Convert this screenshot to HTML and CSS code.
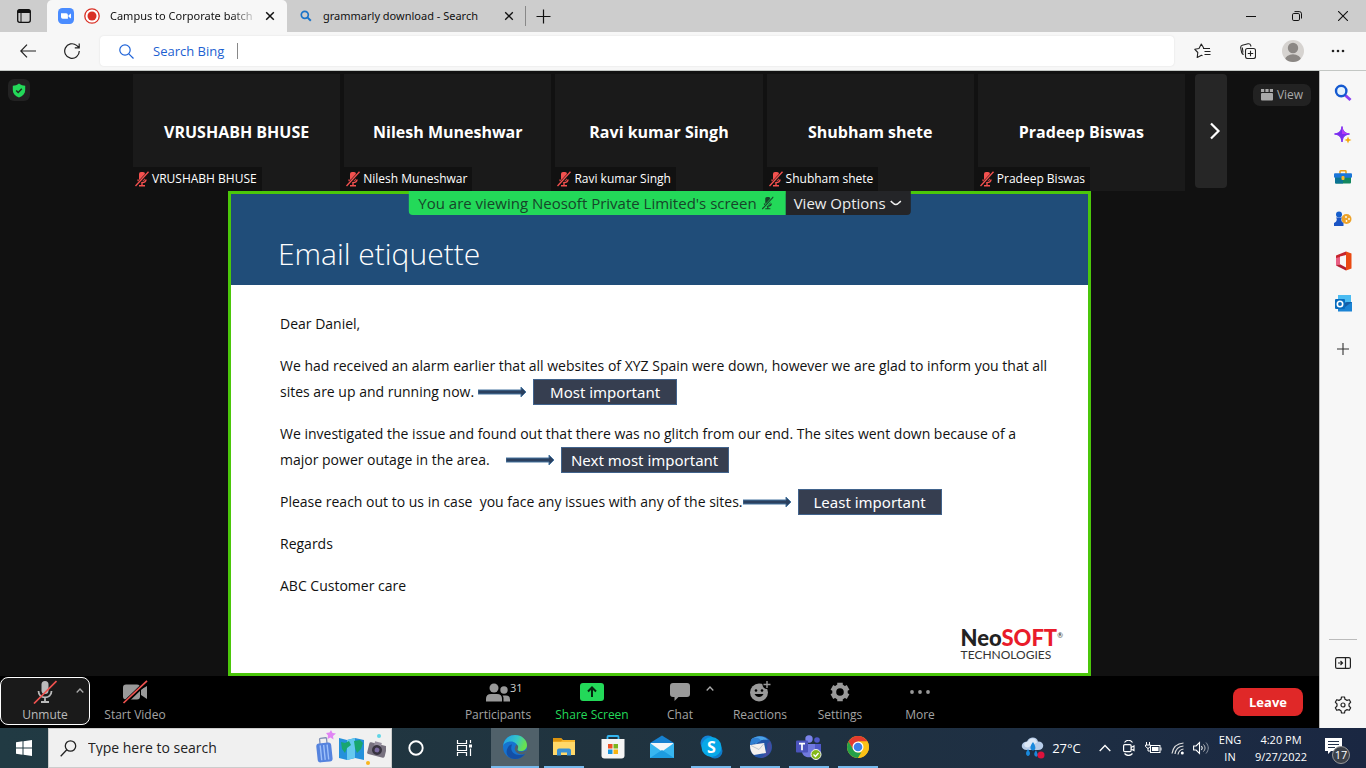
FILE: index.html
```html
<!DOCTYPE html>
<html lang="en">
<head>
<meta charset="utf-8">
<title>Campus to Corporate batch</title>
<link rel="stylesheet" href="styles.css">
</head>
<body>
<header class="browser">
  <div class="tabstrip">
    <button class="tab-menu" aria-label="Tab actions"><svg width="16" height="16" viewBox="0 0 16 16"><rect x="1.7" y="1.7" width="12.6" height="12.6" rx="2" fill="none" stroke="#111" stroke-width="1.3"/><path d="M1.5 3.5a2 2 0 0 1 2-2h9a2 2 0 0 1 2 2V5h-13z" fill="#111"/><path d="M5 5v9" stroke="#111"/></svg></button>
    <div class="tab tab-active">
      <svg width="16" height="16" viewBox="0 0 16 16"><rect width="16" height="16" rx="4.5" fill="#4a8cff"/><path d="M3 5.3h5.2A1.7 1.7 0 0 1 9.900 7v3.700H4.700A1.700 1.700 0 0 1 3 9zM10.500 7.300 13 5.500v5L10.500 8.800z" fill="#fff"/></svg>
      <svg class="rec" width="16" height="16" viewBox="0 0 16 16"><circle cx="8" cy="8" r="7.200" fill="#fff" stroke="#d93025" stroke-width="1.300"/><circle cx="8" cy="8" r="4.500" fill="#d93025"/></svg>
      <span class="tab-title fade">Campus to Corporate batch</span>
      <button class="tab-close" aria-label="Close tab"><svg width="10" height="10" viewBox="0 0 10 10"><path d="M1.200 1.200l7.600 7.600M8.800 1.200L1.200 8.800" stroke="#111" stroke-width="1.500"/></svg></button>
    </div>
    <div class="tab tab-second">
      <svg width="12" height="12" viewBox="0 0 12 12"><circle cx="4.800" cy="4.800" r="3.500" fill="none" stroke="#1a73c8" stroke-width="1.700"/><path d="M7.400 7.400l3.400 3.400" stroke="#1a73c8" stroke-width="2"/></svg>
      <span class="tab-title">grammarly download - Search</span>
      <button class="tab-close" aria-label="Close tab"><svg width="10" height="10" viewBox="0 0 10 10"><path d="M1.200 1.200l7.600 7.600M8.800 1.200L1.200 8.800" stroke="#111" stroke-width="1.300"/></svg></button>
    </div>
    <button class="new-tab" aria-label="New tab"><svg width="15" height="15" viewBox="0 0 15 15"><path d="M7.500 0.500v14M0.500 7.500h14" stroke="#111" stroke-width="1.200"/></svg></button>
    <div class="window-buttons">
      <button aria-label="Minimize"><svg width="10" height="10" viewBox="0 0 10 10"><path d="M0 5.500h10" stroke="#111"/></svg></button>
      <button aria-label="Restore"><svg width="10" height="10" viewBox="0 0 10 10"><rect x=".5" y="2.500" width="7" height="7" rx="1.300" fill="none" stroke="#111"/><path d="M2.500 .6H7.300A2.200 2.200 0 0 1 9.500 2.800V7.500" fill="none" stroke="#111"/></svg></button>
      <button aria-label="Close"><svg width="10" height="10" viewBox="0 0 10 10"><path d="M0 0l10 10M10 0L0 10" stroke="#111" stroke-width="1.100"/></svg></button>
    </div>
  </div>
  <div class="toolbar">
    <button class="nav" aria-label="Back"><svg width="16" height="14" viewBox="0 0 16 14"><path d="M7 .7L.8 7 7 13.300M.8 7H16" fill="none" stroke="#222" stroke-width="1.200"/></svg></button>
    <button class="nav" aria-label="Reload"><svg width="16" height="16" viewBox="0 0 16 16"><path d="M15.300 8A7.300 7.300 0 1 1 12.600 2.400L15 4.500M15.200 0.500V4.800H10.800" fill="none" stroke="#222" stroke-width="1.200"/></svg></button>
    <label class="address">
      <svg width="15" height="15" viewBox="0 0 15 15"><circle cx="6" cy="6" r="5.200" fill="none" stroke="#1d62d8" stroke-width="1.200"/><path d="M9.800 9.800l4.700 4.700" stroke="#1d62d8" stroke-width="1.200"/></svg>
      <input type="text" aria-label="Address and search" value="Search Bing">
      <span class="caret"></span>
    </label>
    <div class="tools">
      <button aria-label="Favorites"><svg width="17" height="16" viewBox="0 0 17 16"><path d="M9.700 5L7.300 1 5 5.500.8 6.300l3 3.200-.6 5 4.300-2.300 1 .5" fill="none" stroke="#222" stroke-width="1.100" stroke-linejoin="round"/><path d="M9 5.500h7M10.500 8.500H16.500M10.500 11.500H16.500" stroke="#222" stroke-width="1.200"/></svg></button>
      <button aria-label="Collections"><svg width="16" height="16" viewBox="0 0 16 16"><rect x="5.500" y="5.500" width="10" height="10" rx="2" fill="none" stroke="#222" stroke-width="1.100"/><path d="M10.500 7.800v5.400M7.800 10.500h5.400M3.700 11.500C2.500 11.300 2 10.500 1.700 9.500L.7 5C.5 3.500 1 2.700 2.300 2.300L8 .8C9.500.5 10.300 1 10.700 2.300L11 3.500M3 9.500L2.300 4.500" fill="none" stroke="#222" stroke-width="1.100"/></svg></button>
      <button aria-label="Profile"><svg width="22" height="22" viewBox="0 0 22 22"><clipPath id="av"><circle cx="11" cy="11" r="11"/></clipPath><g clip-path="url(#av)"><rect width="22" height="22" fill="#d6d3d0"/><circle cx="11" cy="8" r="5.200" fill="#8b8784"/><ellipse cx="11" cy="20" rx="8" ry="5.800" fill="#8b8784"/></g></svg></button>
      <button aria-label="Settings and more"><svg width="14" height="4" viewBox="0 0 14 4"><g fill="#222"><circle cx="2" cy="2" r="1.300"/><circle cx="7" cy="2" r="1.300"/><circle cx="12" cy="2" r="1.300"/></g></svg></button>
    </div>
  </div>
</header>

<svg class="defs" width="0" height="0" aria-hidden="true">
  <symbol id="mic" viewBox="0 0 14 16"><rect x="4" y="1" width="6" height="9" rx="2" fill="currentColor"/><path d="M3 8.500c0 4 8 4 8 0M7 11.500V14.500M4 14.700h6" fill="none" stroke="currentColor" stroke-width="1.400"/><path d="M.5 15.500L14 .8" stroke="var(--cut)" stroke-width="3"/><path d="M.5 15L13.500 .8" stroke="currentColor" stroke-width="1.300"/></symbol>
</svg>

<div class="workspace">
  <main class="meeting">
    <section class="gallery">
      <div class="gallery-left"><button class="shield" aria-label="Encryption"><svg width="14" height="15" viewBox="0 0 14 15"><path d="M7 .5C9 2 11 2.700 13.200 2.700V7C13.200 10.500 11 13 7 14.500 3 13 .8 10.500 .8 7V2.700C3 2.700 5 2 7 .5z" fill="#23d959"/><path d="M4.200 7.500l2 2 3.600-3.800" fill="none" stroke="#1c2b20" stroke-width="1.500"/></svg></button></div>
      <ul class="tiles">
        <li><strong>VRUSHABH BHUSE</strong><span class="name"><svg width="14" height="16"><use href="#mic"/></svg>VRUSHABH BHUSE</span></li>
        <li><strong>Nilesh Muneshwar</strong><span class="name"><svg width="14" height="16"><use href="#mic"/></svg>Nilesh Muneshwar</span></li>
        <li><strong>Ravi kumar Singh</strong><span class="name"><svg width="14" height="16"><use href="#mic"/></svg>Ravi kumar Singh</span></li>
        <li><strong>Shubham shete</strong><span class="name"><svg width="14" height="16"><use href="#mic"/></svg>Shubham shete</span></li>
        <li><strong>Pradeep Biswas</strong><span class="name"><svg width="14" height="16"><use href="#mic"/></svg>Pradeep Biswas</span></li>
      </ul>
      <button class="next" aria-label="Next"><svg width="12" height="18" viewBox="0 0 12 18"><path d="M2 1.500L9.500 9 2 16.500" fill="none" stroke="#fff" stroke-width="2.200"/></svg></button>
      <div class="gallery-right"><button class="view"><svg width="12" height="12" viewBox="0 0 12 12"><g fill="#a9a9a9"><rect width="3.200" height="3"/><rect x="4.400" width="3.200" height="3"/><rect x="8.800" width="3.200" height="3"/><rect y="4" width="12" height="7.500" rx="1"/></g></svg>View</button></div>
    </section>

    <section class="stage">
      <article class="slide">
        <div class="banner">
          <span class="viewing">You are viewing Neosoft Private Limited's screen <svg width="12" height="14"><use href="#mic"/></svg></span>
          <button class="options">View Options <svg width="12" height="7" viewBox="0 0 12 7"><path d="M1 1c2 2 3 3.500 5 3.500S9 3 11 1" fill="none" stroke="#eee" stroke-width="1.700"/></svg></button>
        </div>
        <h1>Email etiquette</h1>
        <div class="letter">
          <p>Dear Daniel,</p>
          <div class="para">We had received an alarm earlier that all websites of XYZ Spain were down, however we are glad to inform you that all
            <div class="line">sites are up and running now.<svg class="arrow first" viewBox="0 0 48 10"><path d="M0 3h43V0l5 5-5 5V7H0z"/></svg><span class="tag">Most important</span></div>
          </div>
          <div class="para">We investigated the issue and found out that there was no glitch from our end. The sites went down because of a
            <div class="line">major power outage in the area.<svg class="arrow second" viewBox="0 0 48 10"><path d="M0 3h43V0l5 5-5 5V7H0z"/></svg><span class="tag tag-wide">Next most important</span></div>
          </div>
          <div class="para line">Please reach out to us in case&nbsp; you face any issues with any of the sites.<svg class="arrow" viewBox="0 0 48 10"><path d="M0 3h43V0l5 5-5 5V7H0z"/></svg><span class="tag">Least important</span></div>
          <p>Regards</p>
          <p>ABC Customer care</p>
        </div>
        <footer class="brand"><div class="brand-name">Neo<span>SOFT</span><sup>®</sup></div><div class="brand-sub">TECHNOLOGIES</div></footer>
      </article>
    </section>

    <nav class="controls">
      <div class="group">
        <button class="ctl unmute"><svg width="24" height="24" viewBox="0 0 24 24"><rect x="8.500" y="1" width="7" height="13" rx="3.500" fill="#bbb"/><path d="M5.500 11c0 8.500 13 8.500 13 0M12 17.500V21.500M8 22h8" fill="none" stroke="#bbb" stroke-width="1.800"/><path d="M1 23.500L23.500 1" stroke="#f0524f" stroke-width="1.700"/></svg>Unmute<svg class="caret-up" width="8" height="5" viewBox="0 0 8 5"><path d="M.7 4.500L4 1l3.300 3.500" fill="none" stroke="#aaa" stroke-width="1.300"/></svg></button>
        <button class="ctl video"><svg width="26" height="24" viewBox="0 0 26 24"><rect x="1" y="4.500" width="17" height="15" rx="3" fill="#999"/><path d="M19 9.500L25 6v13l-6-4z" fill="#999"/><path d="M2.500 23L25.500 1" stroke="#000" stroke-width="4"/><path d="M1.500 23L25 .8" stroke="#f0524f" stroke-width="1.700"/></svg>Start Video</button>
      </div>
      <div class="group">
        <button class="ctl participants"><svg width="24" height="24" viewBox="0 0 24 24"><g fill="#999"><circle cx="8" cy="8" r="4.500"/><path d="M0 21.500v-2.500q0-5 5-5h6q5 0 5 5v2.500z"/><circle cx="18" cy="10" r="3.700"/><path d="M17.500 21.500v-3.500q0-1.500-1-2.500h3.500q4 0 4 4v2z"/></g></svg>Participants<span class="count">31</span></button>
        <button class="ctl share"><svg width="24" height="24" viewBox="0 0 24 24"><rect y="3" width="24" height="18" rx="3" fill="#23d959"/><path d="M12 17V7.500M8 11.500l4-4 4 4" fill="none" stroke="#05250f" stroke-width="2"/></svg>Share Screen</button>
        <button class="ctl chat"><svg width="20" height="24" viewBox="0 0 20 24"><path d="M3 3h14q3 0 3 3v8q0 3-3 3H8.500L4.500 21V17H3q-3 0-3-3V6q0-3 3-3z" fill="#999"/></svg>Chat<svg class="caret-up" width="8" height="5" viewBox="0 0 8 5"><path d="M.7 4.500L4 1l3.300 3.500" fill="none" stroke="#aaa" stroke-width="1.300"/></svg></button>
        <button class="ctl reactions"><svg width="22" height="24" viewBox="0 0 22 24"><circle cx="10" cy="12.500" r="9" fill="#999"/><circle cx="18" cy="4.500" r="4.500" fill="#000"/><path d="M18 1v7M14.500 4.500h7" stroke="#999" stroke-width="1.400"/><circle cx="7" cy="10.500" r="1.300"/><circle cx="13" cy="10.500" r="1.300"/><path d="M5.500 14c2 4 7 4 9 0z"/></svg>Reactions</button>
        <button class="ctl settings"><svg width="20" height="24" viewBox="0 0 20 24"><circle cx="10" cy="12" r="5.800" fill="none" stroke="#999" stroke-width="4"/><g stroke="#999" stroke-width="5.500"><path d="M10 2.700v2.500M10 18.800v2.500M1.900 7.400l2.200 1.200M15.900 15.400l2.200 1.200M1.900 16.600l2.200-1.200M15.900 8.600l2.200-1.200"/></g></svg>Settings</button>
        <button class="ctl more"><svg width="20" height="24" viewBox="0 0 20 24"><g fill="#999"><circle cx="2" cy="12" r="1.900"/><circle cx="10" cy="12" r="1.900"/><circle cx="18" cy="12" r="1.900"/></g></svg>More</button>
      </div>
      <button class="leave">Leave</button>
    </nav>
  </main>

  <aside class="sidebar">
    <button aria-label="Search"><svg width="18" height="18" viewBox="0 0 18 18"><path d="M11 11l5.500 5" stroke="#8a3ff0" stroke-width="3"/><circle cx="7.200" cy="7" r="5.200" fill="#e4f3fd" stroke="#1459d0" stroke-width="2.400"/></svg></button>
    <button aria-label="Discover"><svg width="18" height="18" viewBox="0 0 18 18"><path d="M8 .5C9 5.500 10.500 7 15.500 8 10.500 9 9 10.500 8 16 7 10.500 5.500 9 .5 8 5.500 7 7 5.500 8 .5z" fill="#7a2cf0" stroke="#7a2cf0"/><path d="M8 .5C9 5.500 10.500 7 15.500 8L8 8z" fill="#b43cf5"/><path d="M14 10.500l1 2.500 2.500 1-2.500 1-1 2.500-1-2.500-2.500-1 2.500-1z" fill="#f6a90c"/></svg></button>
    <button aria-label="Tools"><svg width="18" height="14" viewBox="0 0 18 14"><path d="M6 4V1.500q0-.7.800-.7h4.400q.8 0 .8.700V4" fill="none" stroke="#e8a018" stroke-width="1.500"/><rect x="1" y="4" width="16" height="9.500" rx="1" fill="#12875f"/><path d="M1 8h8v5.500H2q-1 0-1-1z" fill="#0b7394"/><rect x="0" y="3.200" width="18" height="4.500" rx="1" fill="#1b76d8"/><rect x="7.500" y="6" width="3" height="4" rx="1" fill="#f9bb28"/></svg></button>
    <button aria-label="Games"><svg width="18" height="16" viewBox="0 0 18 16"><circle cx="12.500" cy="8" r="5" fill="#eda32a"/><g fill="#fff"><circle cx="12" cy="6" r=".9"/><circle cx="15" cy="8" r=".9"/><circle cx="12.500" cy="10" r=".9"/></g><circle cx="5" cy="3.500" r="3" fill="#165ecc"/><path d="M2 6.500h6l-.8 1.500c0 2 .8 3 2.300 4v3H0v-3C2 11 2.800 10 2.800 8z" fill="#1b54c4"/></svg></button>
    <button aria-label="Office"><svg width="17" height="20" viewBox="0 0 17 20"><path d="M11 .5L1 4.500v10l4-1.500V5.500L11 4z" fill="#c6252c"/><path d="M11 .5l5.500 2v15L11 19.500z" fill="#ea4a12"/><path d="M1 14.500l4-1.200 6 3.200v3z" fill="#b41d2f"/><path d="M1 7v7.500L5 13V6z" fill="#e95e83"/></svg></button>
    <button aria-label="Outlook"><svg width="17" height="17" viewBox="0 0 17 17"><rect x="3" width="13" height="10" fill="#4bbcf2"/><path d="M3 7h14v9.500H3z" fill="#1a83d4"/><path d="M17 7l-7 5-3-2 5-3z" fill="#155ea6"/><rect y="4" width="10" height="10" rx="1" fill="#086cbe"/><circle cx="5" cy="9" r="2.700" fill="none" stroke="#fff" stroke-width="1.600"/></svg></button>
    <button aria-label="Add" class="add"><svg width="12" height="12" viewBox="0 0 12 12"><path d="M6 0v12M0 6h12" stroke="#333" stroke-width="1.100"/></svg></button>
    <hr>
    <button aria-label="Hide sidebar"><svg width="16" height="12" viewBox="0 0 16 12"><rect x=".6" y=".6" width="14.800" height="10.800" rx="1.500" fill="none" stroke="#222" stroke-width="1.200"/><path d="M10.500 .5v11" stroke="#222" stroke-width="1.200"/><path d="M3 6h4M5.500 4l2 2-2 2" fill="none" stroke="#222" stroke-width="1.200"/></svg></button>
    <button aria-label="Sidebar settings"><svg width="18" height="18" viewBox="0 0 18 18"><path d="M7.500 1h3l.5 2.300 2 1.100 2.300-.7 1.400 2.500L15 8v2l1.700 1.800-1.400 2.500-2.300-.7-2 1.100-.5 2.300h-3L7 14.700l-2-1.100-2.300.7-1.400-2.500L3 10V8L1.300 6.200l1.400-2.500 2.300.7 2-1.100z" fill="none" stroke="#222" stroke-width="1.200" stroke-linejoin="round"/><circle cx="9" cy="9" r="2" fill="none" stroke="#222" stroke-width="1.200"/></svg></button>
  </aside>
</div>

<footer class="taskbar">
  <button class="start" aria-label="Start"><svg width="16" height="16" viewBox="0 0 16 16"><path d="M0 2.200L6.500 1.300V7.500H0zM7.500 1.200L16 0v7.500H7.500zM0 8.500h6.500v6.200L0 13.800zM7.500 8.500H16V16l-8.500-1.200z" fill="#fff"/></svg></button>
  <label class="search">
    <svg width="17" height="17" viewBox="0 0 17 17"><circle cx="10.500" cy="6" r="5.200" fill="none" stroke="#222" stroke-width="1.300"/><path d="M6.800 9.800L.7 16.200" stroke="#222" stroke-width="1.300"/></svg>
    <input type="text" aria-label="Search" placeholder="Type here to search">
    <svg width="70" height="38" viewBox="0 0 70 38"><path d="M15 1l1.500 3 3.500.5-3 2.500.5 3.500-3-2-3 1.500.5-3.500L10 4l3.500-.5z" fill="#e184f4"/><g transform="rotate(-6 8 24)"><path d="M5 15v-5q0-1 1-1h5q1 0 1 1v5" fill="none" stroke="#8391b5" stroke-width="1.300"/><rect x="1" y="14" width="15" height="19" rx="3" fill="#5583de"/><path d="M5 16v15M8.500 16v15M12 16v15" stroke="#9dc0fa" stroke-width="1.400"/></g><path d="M23 9l8 2 8-2 9 2v20l-9-2-8 2-8-2z" fill="#2491db"/><path d="M31 11l8-2v20l-8 2z" fill="#65c9ef"/><path d="M25 13l4 1 4-2 2 4-4 3-2 5-3-4zM38 12l6-1 3 3-2 6-4 4-2-5z" fill="#19a66f"/><g transform="rotate(14 61 21)"><rect x="52" y="15" width="18" height="12" rx="1.500" fill="#77717f"/><rect x="57" y="13" width="7" height="4" fill="#968f9e"/><circle cx="61" cy="21" r="5" fill="#37333f"/><circle cx="61" cy="21" r="2.400" fill="#796aa0"/></g><circle cx="63" cy="7" r="2" fill="#60d5e6"/><circle cx="52" cy="34" r="2" fill="#f9b61c"/></svg>
  </label>
  <button class="sys" aria-label="Cortana"><svg width="16" height="16" viewBox="0 0 16 16"><circle cx="8" cy="8" r="6.700" fill="none" stroke="#fff" stroke-width="1.900"/></svg></button>
  <button class="sys" aria-label="Task View"><svg width="17" height="16" viewBox="0 0 17 16"><path d="M1.500 0v3.500h9V0M1.500 16v-3.500h9V16M1.500 5.500h9v5h-9zM14.500 0v3M14.500 8.500V16" fill="none" stroke="#fff" stroke-width="1.200"/><rect x="13" y="4.500" width="3" height="3" fill="#fff"/></svg></button>
  <div class="apps">
    <button class="active" aria-label="Edge"><svg width="24" height="24" viewBox="0 0 24 24"><defs><linearGradient id="eg" x1="0" y1="0" x2="1" y2=".3"><stop offset="0" stop-color="#1f9bea"/><stop offset=".6" stop-color="#35c6c8"/><stop offset="1" stop-color="#68e250"/></linearGradient></defs><circle cx="12" cy="12" r="12" fill="#1673cf"/><path d="M0 11C1 4 6 0 12 0c7 0 12 5 12 10 0 4-3 6-6 6-3 0-4-1-3.500-2.500C16 10 12 6.500 8 6.500 4 6.500 1 8.500 0 11z" fill="url(#eg)"/><path d="M9 9.500c-3 7 3 13 13 9.500-2 3-6 5-10 5C5 24 1 18 5.500 11.500 6.500 10 8 9.500 9 9.500z" fill="#134fa5"/><path d="M13.500 9.500c2 1 2 3 1 4.500-.5 1.500 1 2.700 3.500 2.700 2 0 4-.7 5.500-2-.2 1.500-1 3.500-1.800 4.300-7 2-13-4-8.200-9.500z" fill="#50606b"/></svg></button>
    <button class="open" aria-label="File Explorer"><svg width="22" height="20" viewBox="0 0 22 20"><path d="M0 1h8l2 2h12v15H0z" fill="#f7b72e"/><path d="M0 1h8l1.500 2L8 4.500H0z" fill="#dc930f"/><path d="M0 5h22v13H0z" fill="#ffd869"/><path d="M4 18.500v-5q0-2 2-2h10q2 0 2 2v5h-4v-3H8v3z" fill="#388fd3"/></svg></button>
    <button aria-label="Microsoft Store"><svg width="24" height="24" viewBox="0 0 24 24"><path d="M6.500 5V2q0-1 1-1h9q1 0 1 1v3" fill="none" stroke="#33b6f1" stroke-width="1.800"/><path d="M.5 4h23v16.500q0 3-3 3h-17q-3 0-3-3z" fill="#f5f5f5"/><path d="M7 9h4.500v4.500H7z" fill="#ef5124"/><path d="M12.500 9H17v4.500h-4.500z" fill="#7ab51e"/><path d="M7 14.500h4.500V19H7z" fill="#1896df"/><path d="M12.500 14.500H17V19h-4.500z" fill="#f8b411"/></svg></button>
    <button aria-label="Mail"><svg width="24" height="24" viewBox="0 0 24 24"><path d="M0 8L12 .5 24 8v15H0z" fill="#1681d0"/><path d="M1 8h22v8H1z" fill="#f3f7f9"/><path d="M0 8l12 8.500L24 8v15H0z" fill="#38b6ef"/><path d="M0 23l12-8 12 8z" fill="#1d9ce0"/></svg></button>
    <button class="open" aria-label="Skype"><svg width="23" height="24" viewBox="0 0 23 24"><circle cx="8" cy="8" r="7.500" fill="#1483d5"/><circle cx="15" cy="16" r="7.500" fill="#0f7bc9"/><circle cx="11.500" cy="12" r="10" fill="#08a9e8"/><text x="11.500" y="18" text-anchor="middle" class="skype-s">S</text></svg></button>
    <button class="open" aria-label="Thunderbird"><svg width="24" height="24" viewBox="0 0 24 24"><circle cx="13" cy="12" r="11" fill="#2454a6"/><path d="M3 5C7 0 16 0 20 5c-5-1-9 0-12 4z" fill="#4aa3e8"/><path d="M22 6c4 8-1 17-10 17 5-2 8-7 7-14z" fill="#454d9f"/><path d="M2 10l14-2 2 10-12 2C3 18 2 14 2 10z" fill="#f5f1ee"/><path d="M3 10.500l8 4 5-6" fill="none" stroke="#bfc6cf"/><path d="M5 3c4-1 7 0 8 3l-5 2-6 2c0-3 1-6 3-7z" fill="#2f7fd2"/></svg></button>
    <button class="open" aria-label="Teams"><svg width="26" height="25" viewBox="0 0 26 25"><circle cx="13" cy="4" r="3.700" fill="#7b83eb"/><circle cx="21" cy="5" r="2.800" fill="#5059c9"/><path d="M15 9h10v7c0 4-3 5-5 4z" fill="#5059c9"/><path d="M6 9h13v8c0 7-12 7-13 0z" fill="#7179df"/><rect y="5.500" width="12" height="12" rx="1" fill="#4b53bc"/><path d="M3 8.700h6M6 8.700v6.500" stroke="#fff" stroke-width="1.700"/><circle cx="20" cy="19.500" r="5" fill="#85b91b" stroke="#f2f2f2"/><path d="M17.500 19.500l2 2 3-3.500" fill="none" stroke="#fff" stroke-width="1.300"/></svg></button>
    <button class="open" aria-label="Chrome"><svg width="22" height="22" viewBox="0 0 22 22"><circle cx="11" cy="11" r="11" fill="#fbc116"/><path d="M1.500 5.500A11 11 0 0 1 20.500 5.500H11L6.200 13.700z" fill="#e33b2e"/><path d="M1.500 5.500L6.300 13.700Q8 16 11 16.500h4L11 22A11 11 0 0 1 1.500 5.500z" fill="#24a148"/><path d="M15.800 13.700L11 22a11 11 0 0 0 9.500-16.500H11z" fill="#fbc116"/><circle cx="11" cy="11" r="5.500" fill="#fff"/><circle cx="11" cy="11" r="4.300" fill="#3d7fe8"/></svg></button>
  </div>
  <div class="tray">
    <button class="weather"><svg width="24" height="22" viewBox="0 0 24 22"><path d="M6 13c-7 0-7-8 0-8.500C8-1 16-1 17 4.500c7 0 7 8.500 0 8.500z" fill="#b6cce8"/><path d="M7 10.500c-5 0-5-5.500 0-6C9 .5 15 .5 16 5.500z" fill="#dce8f6"/><path d="M12 5q-4 5-2 7.500 2 2 4 0Q15.500 10 12 5zM7 12q-3 4-1.500 6t3 0Q10 16 7 12zM15 13q-3 4-1 6t3-1z" fill="#1989dc"/><circle cx="20" cy="18" r="3.500" fill="#dc123c"/></svg>27°C</button>
    <button aria-label="Show hidden icons"><svg width="12" height="8" viewBox="0 0 12 8"><path d="M.7 7L6 1.500 11.300 7" fill="none" stroke="#fff" stroke-width="1.300"/></svg></button>
    <button aria-label="Meet now"><svg width="12" height="16" viewBox="0 0 12 16"><rect x=".6" y="4.600" width="7.500" height="7" rx="1.200" fill="none" stroke="#fff" stroke-width="1.200"/><path d="M8 7.500l3-1.500v4.500L8 9M1.500 2.500C4-.5 7-.5 9.500 2.500M1.500 13.500c2.500 2.500 5.500 2.500 8 0" fill="none" stroke="#fff" stroke-width="1.100"/></svg></button>
    <button aria-label="Battery"><svg width="17" height="14" viewBox="0 0 17 14"><rect x="5.500" y="4.500" width="9.500" height="7" fill="none" stroke="#fff"/><rect x="7" y="6" width="6.500" height="4" fill="#fff"/><path d="M16 6.500v3M1.500 1v3M4.500 1v3M.5 4h5v1.500L3 7.500.5 5.500zM3 7v3h2.500" stroke="#fff" fill="none"/></svg></button>
    <button aria-label="Network"><svg width="13" height="14" viewBox="0 0 13 14"><path d="M1 12.500C2 6 6 2.500 12.500 2M4 13C4.500 8.500 7.500 5.500 12.500 5M7 13.500C7.500 10.500 9.500 8.500 12.500 8" fill="none" stroke="#ddd" stroke-width="1.200"/><circle cx="11.300" cy="12" r="1.500" fill="#fff"/></svg></button>
    <button aria-label="Volume"><svg width="17" height="14" viewBox="0 0 17 14"><path d="M.6 5h2.500L6.500 1.500v11L3.100 9H.6zM8.500 5c1 1.300 1 2.700 0 4" fill="none" stroke="#fff" stroke-width="1.100"/><path d="M10.500 3.500c2 2.300 2 4.700 0 7" fill="none" stroke="#ccc"/><path d="M13 1.500c3 3.500 3 7.500 0 11" fill="none" stroke="#8a94a2"/></svg></button>
    <button class="lang">ENG<br>IN</button>
    <button class="clock">4:20 PM<br>9/27/2022</button>
    <button class="notes" aria-label="17 notifications"><svg width="17" height="16" viewBox="0 0 17 16"><path d="M0 0h17v13H6l-3 3v-3H0z" fill="#fff"/><path d="M3 3.500h11M3 6.500h11M3 9.500h7" stroke="#24324a" stroke-width="1.200"/></svg><span>17</span></button>
  </div>
</footer>
</body>
</html>
```
FILE: styles.css
```css
* { box-sizing: border-box; }
body {
  margin: 0;
  min-height: 100vh;
  display: flex;
  flex-direction: column;
  font: 12px/16px "Open Sans", "Noto Sans", sans-serif;
  color: #111;
}
button {
  display: flex;
  align-items: center;
  justify-content: center;
  padding: 0;
  border: 0;
  background: none;
  font: inherit;
  color: inherit;
}
input { border: 0; padding: 0; background: none; font: inherit; color: inherit; outline: 0; min-width: 0; }
svg { display: block; flex: none; }
.defs { position: absolute; }

/* Browser chrome */
.tabstrip { display: flex; height: 32px; background: #cdcdcd; }
.tab-menu { width: 47px; }
.tab { display: flex; align-items: center; font-family: "Noto Sans", sans-serif; font-size: 11px; }
.tab-active { width: 240px; padding: 0 11px; background: #f7f7f7; border-radius: 5px 5px 0 0; }
.rec { margin-left: 10px; }
.tab-title { flex: 1; margin-left: 10px; white-space: nowrap; overflow: hidden; }
.tab-second .tab-title { margin-left: 11px; }
.fade { -webkit-mask-image: linear-gradient(to right, #000 82%, transparent); mask-image: linear-gradient(to right, #000 82%, transparent); }
.tab-close { width: 12px; height: 16px; margin-left: 6px; }
.tab-second { width: 239px; margin: 6px 0; padding: 0 10px 0 13px; border-right: 1px solid #888; }
.new-tab { width: 35px; }
.window-buttons { display: flex; margin-left: auto; }
.window-buttons button { width: 46px; }
.toolbar {
  display: flex;
  align-items: center;
  height: 39px;
  padding-left: 6px;
  background: #f7f7f7;
  border-bottom: 1px solid #c3c7c4;
}
.nav { width: 44px; height: 32px; }
.address {
  display: flex;
  align-items: center;
  flex: 1;
  height: 30px;
  margin-left: 6px;
  padding-left: 19px;
  border-radius: 4px;
  background: #fff;
  box-shadow: 0 0 2px #ddd;
  color: #1d5fd1;
  font-size: 13px;
}
.address input { width: 76px; margin-left: 19px; }
.caret { width: 1px; height: 16px; margin-left: 8px; background: #888; }
.tools { display: flex; padding: 0 6px; }
.tools button { width: 45px; height: 32px; }

/* Meeting */
.workspace { display: flex; flex: 1; }
.meeting { display: flex; flex-direction: column; flex: 1; min-width: 0; background: #111; color: #fff; }
.gallery { display: flex; padding-top: 3px; height: 120px; }
.gallery-left { width: 133px; padding: 5px 8px; }
.shield { width: 22px; height: 22px; border-radius: 6px; background: #222; }
.tiles {
  display: grid;
  grid-template-columns: repeat(5, 1fr);
  gap: 4px;
  flex: 1;
  margin: 0;
  padding: 0;
  list-style: none;
}
.tiles li { display: flex; flex-direction: column; align-items: flex-start; background: #1a1a1a; }
.tiles strong { flex: 1; align-self: stretch; padding-top: 46px; text-align: center; font-size: 16px; line-height: 24px; font-weight: 700; }
.name {
  --cut: #111;
  display: flex;
  align-items: center;
  gap: 3px;
  height: 24px;
  padding: 0 5px 0 2px;
  background: #111;
}
.name svg { color: #f4514f; }
.next { width: 32px; height: 114px; margin-left: 10px; padding-left: 7px; border-radius: 4px; background: #262626; }
.gallery-right { width: 92px; padding: 10px 8px 0 26px; }
.view { gap: 4px; width: 58px; height: 22px; border-radius: 7px; background: #222; color: #a9a9a9; }

.stage { display: flex; flex: 1; padding: 0 228px; }
.slide { position: relative; display: flex; flex-direction: column; flex: 1; min-width: 0; border: 3px solid #4bc70a; background: #fff; color: #111; }
.banner { position: absolute; top: -3px; left: 50%; display: flex; height: 24px; font-size: 15px; line-height: 24px; white-space: nowrap; transform: translateX(-50%); }
.viewing { --cut: #23d959; display: flex; gap: 5px; padding: 0 12px 0 10px; border-radius: 0 0 0 4px; background: #23d959; color: #17452a; }
.viewing svg { margin-top: 5px; }
.options { gap: 4px; padding: 0 9px 0 8px; border-radius: 0 0 4px 0; background: #242528; color: #eee; }
h1 { margin: 0; padding: 38px 47px 9px; background: #204d79; color: #fff; font-size: 30px; line-height: 44px; font-weight: 300; }
.letter { flex: 1; padding: 26px 20px 0 49px; font-size: 14px; line-height: 26px; white-space: nowrap; }
.letter p, .para { margin: 0 0 16px; }
.line { display: flex; align-items: center; height: 26px; }
.arrow { width: 48px; height: 10px; fill: #2b405f; stroke: #4775a0; stroke-width: 1px; }
.first { margin-left: 4px; }
.second { margin-left: 16px; }
.tag { width: 144px; margin-left: 7px; border: 1px solid #41638c; background: #363e50; color: #fff; text-align: center; font-family: "Noto Sans", sans-serif; font-size: 15px; line-height: 24px; }
.tag-wide { width: 168px; }
.brand { align-self: flex-end; padding: 0 25px 12px 0; }
.brand-name { font: 900 22px/20px Lato, sans-serif; color: #222; }
.brand-name span { color: #e91c2b; }
.brand-name sup { font-size: 7px; line-height: 0; font-weight: 400; }
.brand-sub { font: 12px/13px Lato, sans-serif; color: #333; }

.controls { display: flex; justify-content: space-between; height: 52px; padding-right: 16px; background: #000; color: #a3a3a3; }
.group { display: flex; }
.ctl { position: relative; flex-direction: column; justify-content: flex-start; gap: 3px; padding-top: 4px; height: 50px; white-space: nowrap; }
.unmute { width: 90px; height: 48px; margin-top: 1px; padding-top: 2px; border: 1px solid #fff; border-radius: 8px; background: #1a1a1a; color: #bbb; }
.reactions, .more { width: 76px; }
.video { width: 90px; }
.participants { width: 96px; }
.share { width: 92px; color: #23d959; }
.chat, .settings { width: 84px; }
.caret-up { position: absolute; top: 10px; right: 5px; }
.chat .caret-up { right: 8px; }
.count { position: absolute; top: 4px; left: 60px; color: #ccc; font-size: 11px; }
.leave { width: 70px; height: 28px; margin: 12px 0 0 5px; border-radius: 8px; background: #e02828; color: #fff; font-size: 13px; font-weight: 700; }

.sidebar { display: flex; flex: none; flex-direction: column; width: 47px; padding-top: 1px; border-left: 1px solid #bbb; background: #f7f7f7; }
.sidebar button { height: 42px; }
.sidebar .add { height: 50px; }
.sidebar hr { width: 28px; height: 1px; margin: auto auto 2px; border: 0; background: #bbb; }
.sidebar button:last-child { margin-bottom: 2px; }

/* Taskbar */
.taskbar { display: flex; height: 40px; background: linear-gradient(to right, #213a43, #20333f 45%, #1e2f43 75%, #1a2742); color: #fff; }
.start, .sys { width: 48px; }
.search { display: flex; align-items: center; width: 344px; padding: 0 5px 0 11px; border: 1px solid #ccc; background: #f0f0f0; color: #222; font-size: 14px; }
.search input { flex: 1; margin-left: 11px; }
.search input::placeholder { color: #222; opacity: 1; }
.apps { display: flex; gap: 1px; margin-left: 3px; }
.apps button { width: 48px; border-bottom: 2px solid transparent; }
.apps .active { background: #50616a; border-color: #76b9ed; }
.apps .open { width: 40px; margin: 0 4px; border-color: #76b9ed; }
.skype-s { font: 700 16px "Open Sans", sans-serif; fill: #fff; }
.tray { display: flex; margin-left: auto; }
.tray button { width: 24px; white-space: nowrap; }
.tray .weather { width: 68px; gap: 7px; margin-right: 8px; font-size: 13px; }
.tray .lang { width: 34px; font-size: 11px; line-height: 17px; }
.tray .clock { width: 68px; font-size: 11px; line-height: 17px; }
.tray .notes { position: relative; width: 46px; margin-right: 5px; padding: 0 10px 4px 0; }
.notes span { position: absolute; top: 18px; left: 17px; width: 18px; height: 18px; border: 1px solid #999; border-radius: 50%; background: #3b4048; font-size: 11px; line-height: 16px; text-align: center; }
```
